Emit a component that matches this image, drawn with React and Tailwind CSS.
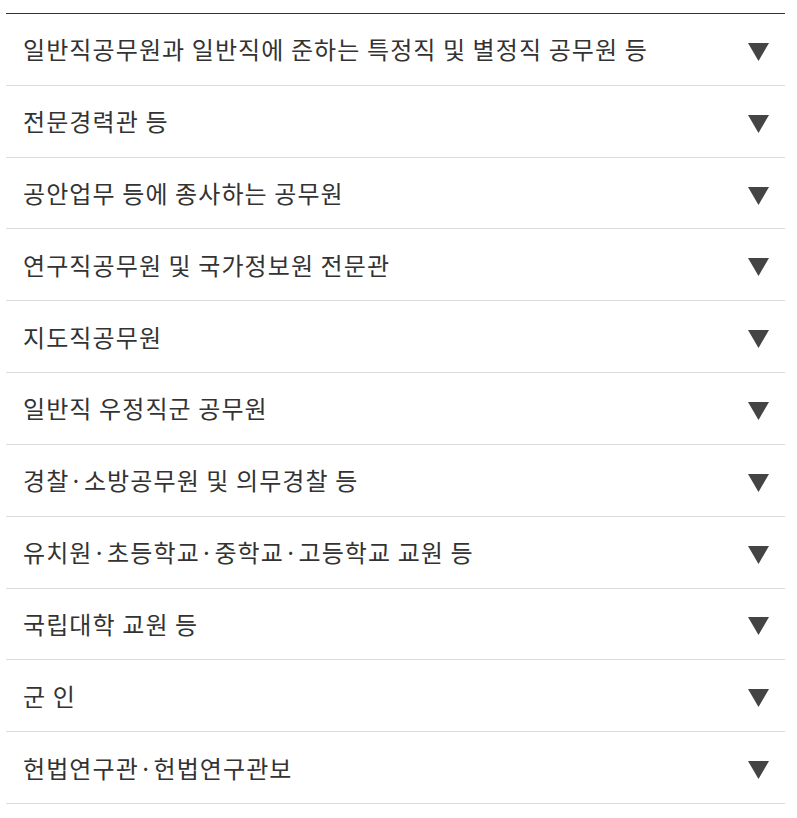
const items = [
  '일반직공무원과 일반직에 준하는 특정직 및 별정직 공무원 등',
  '전문경력관 등',
  '공안업무 등에 종사하는 공무원',
  '연구직공무원 및 국가정보원 전문관',
  '지도직공무원',
  '일반직 우정직군 공무원',
  '경찰·소방공무원 및 의무경찰 등',
  '유치원·초등학교·중학교·고등학교 교원 등',
  '국립대학 교원 등',
  '군 인',
  '헌법연구관·헌법연구관보',
];

export default function App() {
  return (
    <div className="min-h-screen bg-white pt-[13px]" style={{ fontFamily: '"Noto Sans CJK KR", "Noto Sans", sans-serif' }}>
      <ul className="ml-[6px] w-[779px] border-t border-[#333]">
        {items.map((label) => (
          <li
            key={label}
            className="flex h-[71.82px] items-center justify-between border-b border-[#dcdcdc] pl-[17px] pr-[16px]"
          >
            <span className="text-[24px] leading-none tracking-[1.1px] text-[#333]">{label}</span>
            <svg width="21" height="18" viewBox="0 0 21 18" className="mt-[5px]">
              <polygon points="0,0 21,0 10.5,18" fill="#444" />
            </svg>
          </li>
        ))}
      </ul>
    </div>
  );
}
